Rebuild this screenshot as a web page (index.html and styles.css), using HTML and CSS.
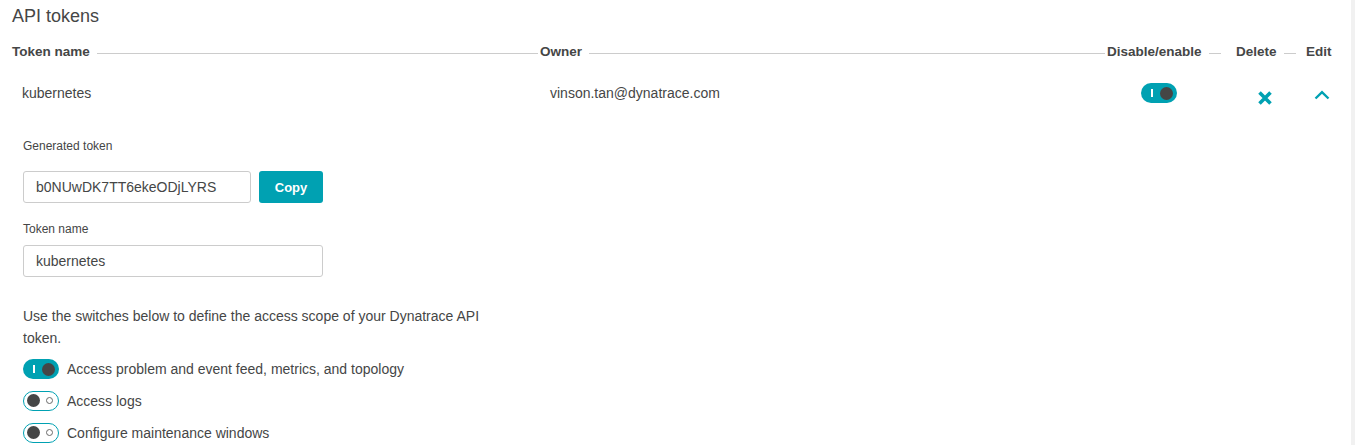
FILE: index.html
```html
<!DOCTYPE html>
<html lang="en">
<head>
<meta charset="utf-8">
<title>API tokens</title>
<link rel="stylesheet" href="styles.css">
</head>
<body>
<div class="page">
  <main class="main">
    <h1 class="title">API tokens</h1>

    <div class="grid header">
      <div class="hcell hcell--c1"><span>Token name</span><i class="rule"></i></div>
      <div class="hcell hcell--c2"><span>Owner</span><i class="rule"></i></div>
      <div class="hcell hcell--c3"><span>Disable/enable</span><i class="rule"></i></div>
      <div class="hcell hcell--c4"><span>Delete</span><i class="rule"></i></div>
      <div class="hcell"><span>Edit</span></div>
    </div>

    <div class="grid row">
      <div class="cell cell--name">kubernetes</div>
      <div class="cell cell--owner">vinson.tan@dynatrace.com</div>
      <div class="cell cell--toggle"><span class="switch switch--on"><span class="switch-bar"></span><span class="switch-knob"></span></span></div>
      <div class="cell cell--delete">
        <svg class="icon-x" width="16" height="16" viewBox="0 0 16 16"><path d="M2.5 2.5 L13.5 13.5 M13.5 2.5 L2.5 13.5" stroke="#00a1b2" stroke-width="3.6" fill="none"/></svg>
      </div>
      <div class="cell cell--edit">
        <svg class="icon-chev" width="16" height="10" viewBox="0 0 16 10"><path d="M1.5 8.5 L8 2.2 L14.5 8.5" stroke="#00a1b2" stroke-width="2.4" fill="none"/></svg>
      </div>
    </div>

    <section class="details">
      <div class="label label--gen">Generated token</div>
      <div class="token-line">
        <div class="input input--token">b0NUwDK7TT6ekeODjLYRS</div>
        <button class="btn">Copy</button>
      </div>
      <div class="label label--name">Token name</div>
      <div class="input input--name">kubernetes</div>

      <p class="intro">Use the switches below to define the access scope of your Dynatrace API token.</p>

      <ul class="scopes">
        <li class="scope"><span class="switch switch--on"><span class="switch-bar"></span><span class="switch-knob"></span></span>Access problem and event feed, metrics, and topology</li>
        <li class="scope"><span class="switch switch--off"><span class="switch-knob"></span><span class="switch-ring"></span></span>Access logs</li>
        <li class="scope"><span class="switch switch--off"><span class="switch-knob"></span><span class="switch-ring"></span></span>Configure maintenance windows</li>
      </ul>
    </section>
  </main>
  <div class="strip"></div>
</div>
</body>
</html>
```
FILE: styles.css
```css
html, body {
  margin: 0;
  padding: 0;
  background: #ffffff;
  height: 100%;
  overflow: hidden;
}

body {
  font-family: "Liberation Sans", Arial, sans-serif;
  color: #454646;
  font-size: 14px;
}

.page {
  display: flex;
  height: 100vh;
}

.main {
  flex: 1;
  padding-left: 12px;
}

.strip {
  width: 4px;
  background: #f1f1f1;
}

.title {
  margin: 0;
  padding-top: 5px;
  font-size: 18px;
  line-height: 22px;
  font-weight: normal;
  color: #454646;
}

.grid {
  display: grid;
  grid-template-columns: 528px 567px 129px 70px 1fr;
}

.header {
  margin-top: 14px;
  height: 22px;
  align-items: center;
}

.hcell {
  display: flex;
  align-items: center;
  font-weight: bold;
  font-size: 13.5px;
  line-height: 22px;
  white-space: nowrap;
}

.hcell--c1, .hcell--c2 { padding-right: 2px; }
.hcell--c3 { padding-right: 15px; }
.hcell--c4 { padding-right: 10px; }

.rule {
  flex: 1;
  height: 1px;
  background: #cccccc;
  margin-left: 7px;
  margin-top: 2px;
}

.row {
  height: 60px;
  align-items: center;
}

.cell {
  display: flex;
  align-items: center;
  line-height: 20px;
}

.cell--name, .cell--owner { padding-left: 10px; }
.cell--toggle { padding-left: 34px; }
.cell--delete { padding-left: 21px; margin-top: 9px; }
.cell--edit { padding-left: 8px; margin-top: 4px; }

.icon-x, .icon-chev { display: block; }

.switch {
  position: relative;
  display: inline-block;
  flex: none;
  width: 36px;
  height: 20px;
  border-radius: 10px;
  box-sizing: border-box;
}

.switch--on {
  background: #00a1b2;
}

.switch--off {
  background: #ffffff;
  border: 1.5px solid #00a1b2;
}

.switch-bar {
  position: absolute;
  left: 10px;
  top: 6px;
  width: 2px;
  height: 8px;
  background: #ffffff;
}

.switch-knob {
  position: absolute;
  width: 13px;
  height: 13px;
  border-radius: 50%;
  background: #454646;
}

.switch--on .switch-knob {
  right: 4px;
  top: 3.5px;
}

.switch--off .switch-knob {
  left: 2.5px;
  top: 2px;
  width: 13px;
  height: 13px;
}

.switch-ring {
  position: absolute;
  right: 5px;
  top: 5px;
  width: 5px;
  height: 5px;
  border-radius: 50%;
  border: 1.2px solid #6a6a6a;
  box-sizing: content-box;
}

.details {
  padding-left: 11px;
  padding-top: 15px;
}

.label {
  font-size: 12px;
  line-height: 16px;
}

.label--name {
  margin-top: 18px;
}

.token-line {
  display: flex;
  margin-top: 17px;
}

.input {
  box-sizing: border-box;
  height: 32px;
  border: 1px solid #cccccc;
  border-radius: 3px;
  padding-left: 12px;
  display: flex;
  align-items: center;
  font-size: 14px;
}

.input--token { width: 228px; }
.input--name { width: 300px; margin-top: 8px; }

.btn {
  margin-left: 8px;
  width: 64px;
  height: 32px;
  border: none;
  border-radius: 3px;
  background: #00a1b2;
  color: #ffffff;
  font-family: inherit;
  font-weight: bold;
  font-size: 13px;
  padding: 0;
}

.intro {
  margin: 28px 0 0;
  width: 480px;
  line-height: 22px;
}

.scopes {
  list-style: none;
  margin: 4px 0 0;
  padding: 0;
}

.scope {
  display: flex;
  align-items: center;
  gap: 8px;
  height: 32px;
}
```
